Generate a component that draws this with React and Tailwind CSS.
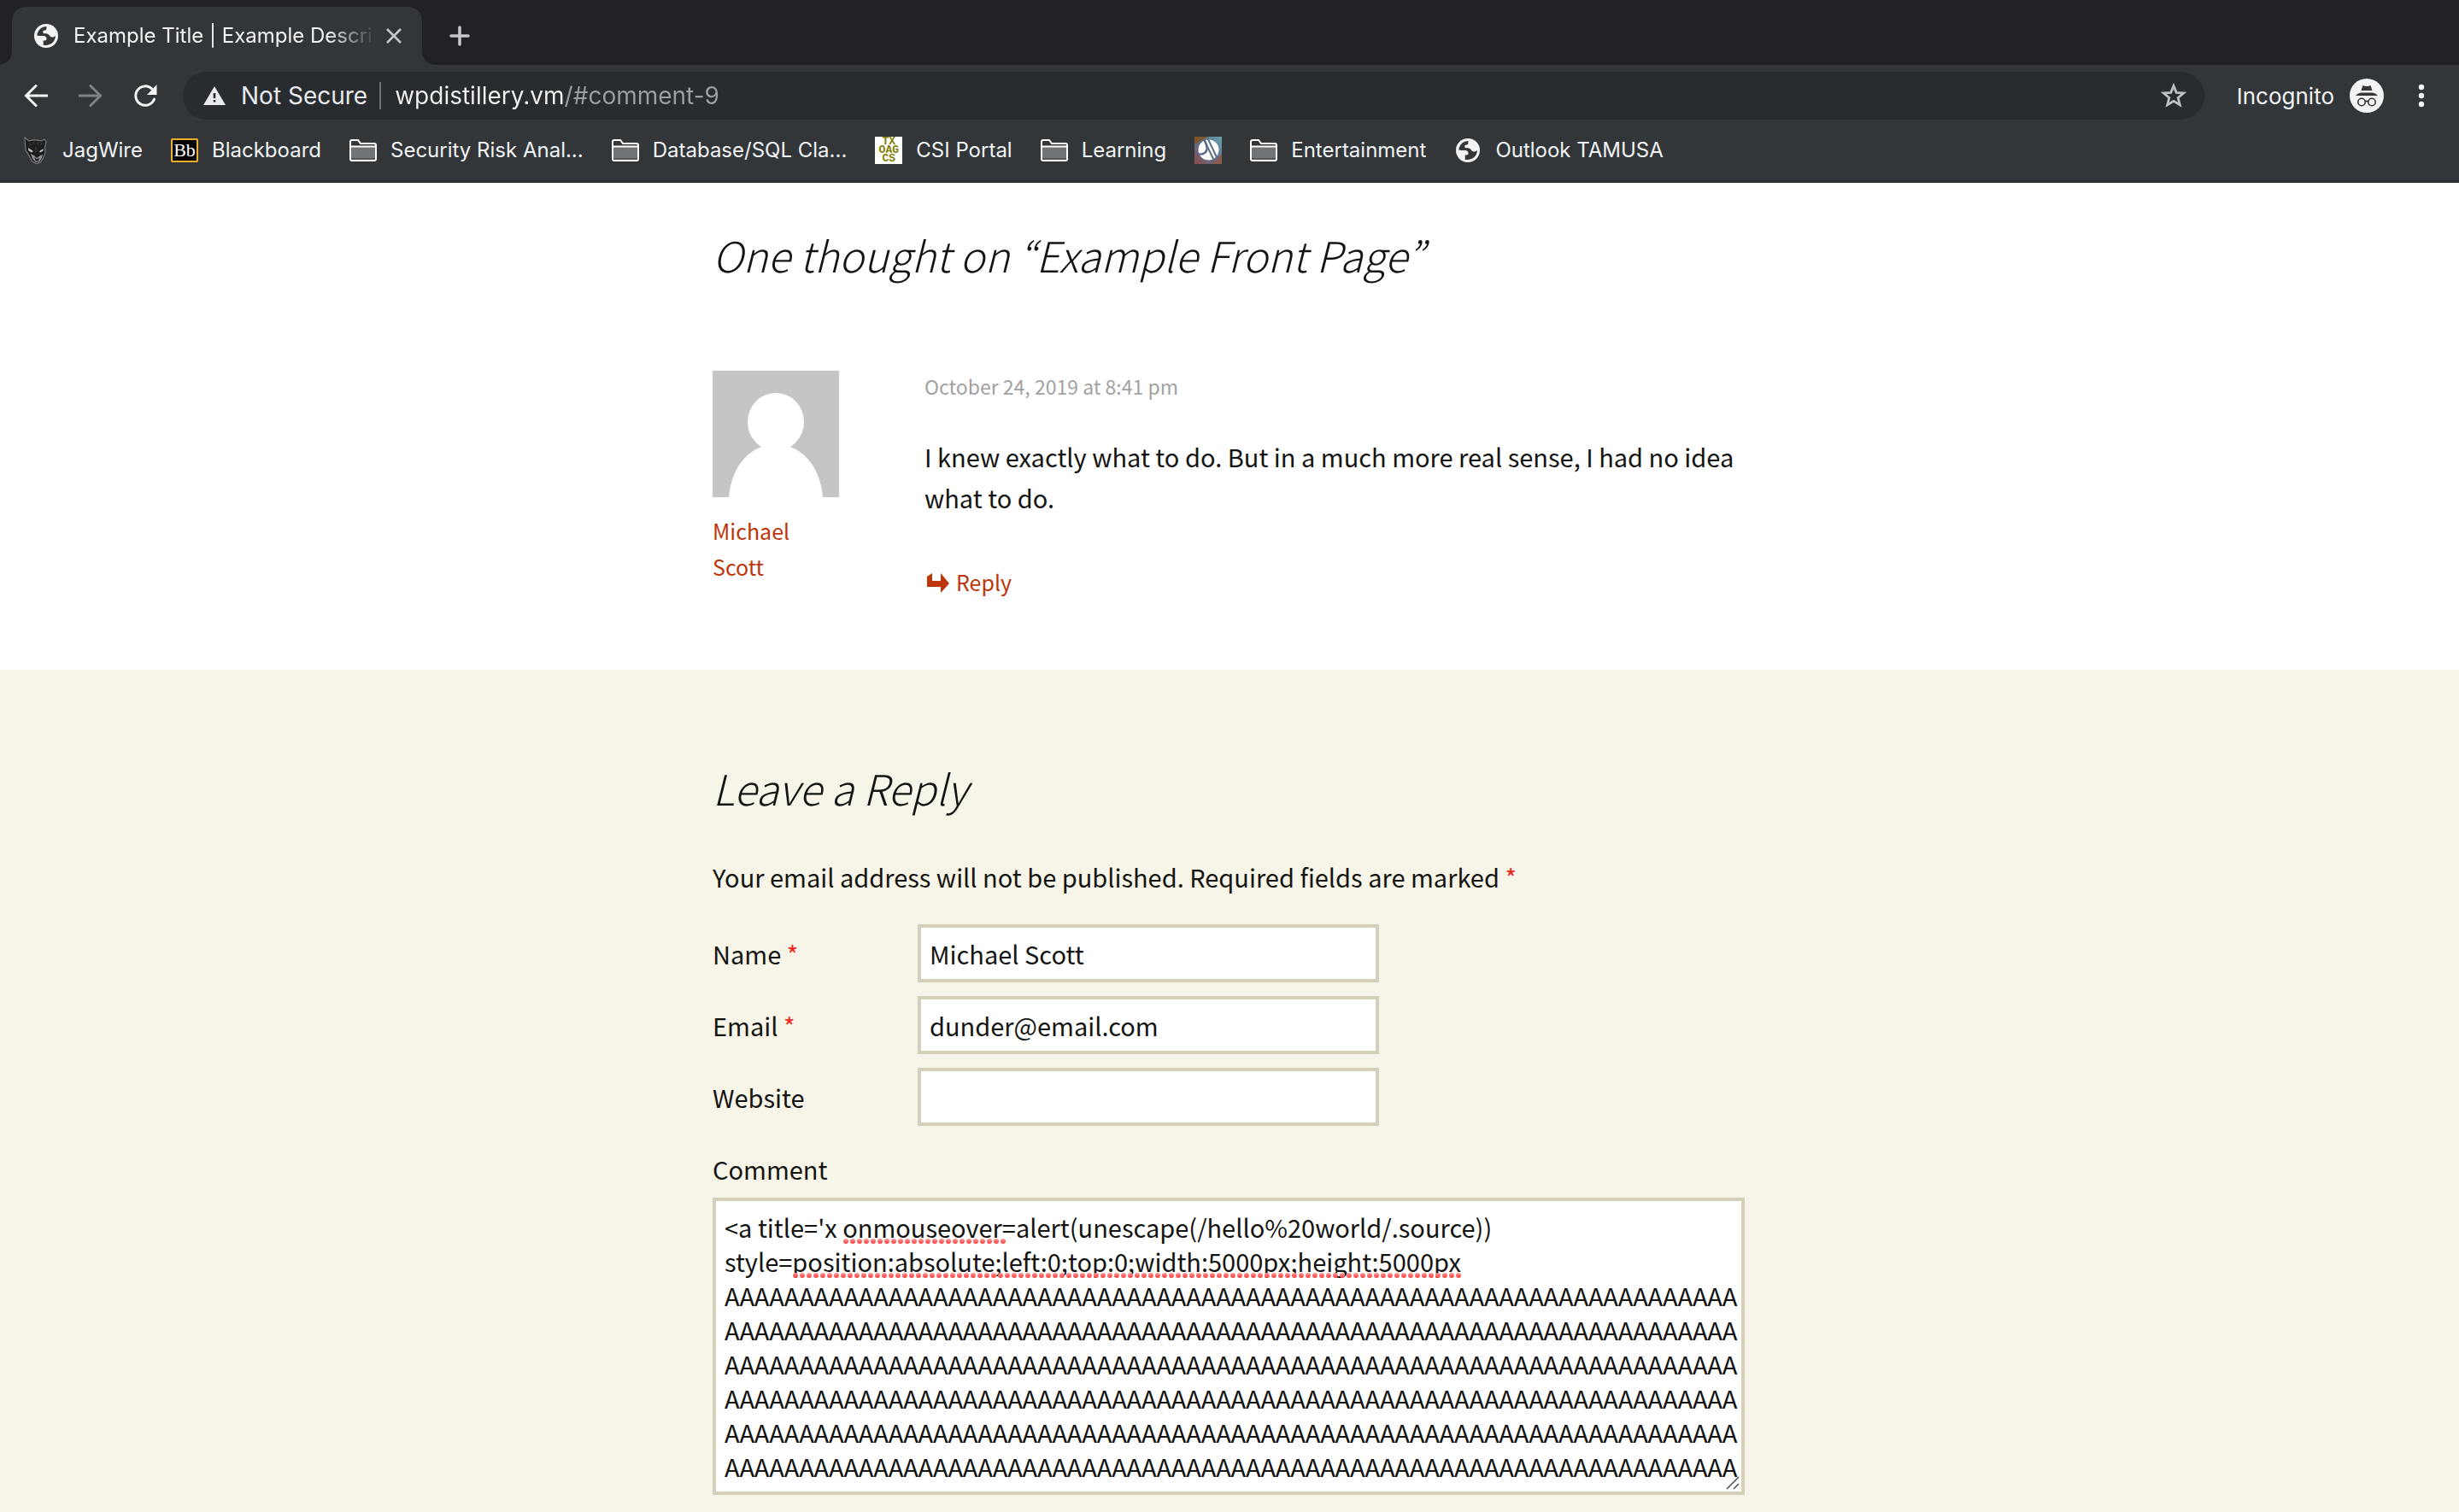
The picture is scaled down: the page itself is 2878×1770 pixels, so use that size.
import { useId } from "react";

const A_LINE = "A".repeat(68);
const COMMENT = [
  "<a title='x onmouseover=alert(unescape(/hello%20world/.source))",
  "style=position:absolute;left:0;top:0;width:5000px;height:5000px",
  A_LINE, A_LINE, A_LINE, A_LINE, A_LINE, A_LINE,
].join("\n");

function Globe() {
  return (
    <svg viewBox="0 0 28 28" className="size-7" aria-hidden="true">
      <circle cx="14" cy="14" r="14" fill="#f1f3f4" />
      <path
        d="M14.500 3C9 3 4 7 3.300 13.600L6 14h5.500c1.500.2 2.700 1.300 3 3 .2 1.600-.6 2.500-2 2.500h-1.800V24.700C18.500 26 25 21 24.900 13.700c-1 1.400-2.700 2-4.400 1.700-1.800-.4-2.300-1.700-3.500-2.900-1-1-2.500-1.300-4.500-1.300-1.400 0-2.300-.6-2.300-1.800 0-1.400 1.100-1.900 2.400-1.900 1.500 0 1.700-.7 1.700-1.900z"
        fill="#323639"
      />
    </svg>
  );
}

function Folder() {
  return (
    <svg viewBox="0 0 32 26" className="w-8 h-[26px]" aria-hidden="true">
      <path d="M1 3a2 2 0 0 1 2-2h7l3 4h16a2 2 0 0 1 2 2v16a2 2 0 0 1-2 2H3a2 2 0 0 1-2-2z" fill="#323639" stroke="#fff" strokeWidth="2" />
      <path d="M2 9h28v14.500H2z" fill="#707477" />
      <path d="M2 22h28v2H2z" fill="#54585b" />
      <path d="M1 8.500h30" stroke="#fff" strokeWidth="2" />
    </svg>
  );
}

function Jaguar() {
  return (
    <svg viewBox="0 0 32 32" className="size-8" aria-hidden="true">
      <path d="M4 1l5 4c4-1.500 9-1.500 14 0l4-2 2 3-1.500 6 .5 7-2.500 6-3 5-5 1.500-5-2.500-3.500-7-4-6-.5-7z" fill="#1c1d1f" stroke="#77797c" strokeWidth="1.200" />
      <path d="M8 13l6 4-2 1.500-3.500-2zM26 14l-5 3 .8 1.600L25 17z" fill="#c0c2c4" />
      <path d="M11 20l4 2 3 3 4-3 3-1-1 4-3 4.500-4 .5-4-4z" fill="#8b8d90" />
      <path d="M15 24l3 2.500 3-2-1 4h-3z" fill="#1b1c1e" />
      <path d="M9 8l3 2M14 6l1 3M20 6l-1 3M24 7l-2 3M17 12v6" stroke="#3c3e41" strokeWidth="1.200" />
    </svg>
  );
}

function BbIcon() {
  return (
    <span className="flex h-7 w-8 items-center justify-center rounded-xs border-2 border-[#eeb02c] bg-black font-['Liberation_Serif',serif] text-[22px] leading-none text-white">
      Bb
    </span>
  );
}

function TxIcon() {
  return (
    <span className="flex size-8 flex-col items-center justify-center bg-white font-['Liberation_Mono',monospace] text-[13px] leading-[10px] font-bold text-[#808000]">
      <span>TX</span>
      <span>OAG</span>
      <span>CS</span>
    </span>
  );
}

function SlashIcon() {
  const id = useId();
  return (
    <svg viewBox="0 0 32 32" className="size-8" aria-hidden="true">
      <defs>
        <linearGradient id={id} x1="0" y1="1" x2="1" y2="0">
          <stop offset="0" stopColor="#8a4d45" />
          <stop offset=".5" stopColor="#5a6f96" />
          <stop offset="1" stopColor="#6aa3a8" />
        </linearGradient>
      </defs>
      <rect width="32" height="32" fill={`url(#${id})`} />
      <path d="M0 0h16L0 9z" fill="#7d5528" />
      <path d="M20 32l12-12v12z" fill="#8a5a50" />
      <circle cx="16.500" cy="15.500" r="12" fill="#fff" />
      <path d="M11 3l12 25M15 1l12 25" stroke="#5a7186" strokeWidth="2" />
      <path d="M11 3c4 7 5 13 1 16-3 2-6 2-9 1" fill="none" stroke="#5a6a8c" strokeWidth="2.400" />
    </svg>
  );
}

const BOOKMARKS = [
  { icon: <Jaguar />, label: "JagWire" },
  { icon: <BbIcon />, label: "Blackboard" },
  { icon: <Folder />, label: "Security Risk Anal..." },
  { icon: <Folder />, label: "Database/SQL Cla..." },
  { icon: <TxIcon />, label: "CSI Portal" },
  { icon: <Folder />, label: "Learning" },
  { icon: <SlashIcon />, label: "" },
  { icon: <Folder />, label: "Entertainment" },
  { icon: <Globe />, label: "Outlook TAMUSA" },
];

function TabStrip() {
  return (
    <div className="flex h-[76px] items-end bg-[#202124]">
      <svg viewBox="0 0 16 16" className="-ml-0.5 size-4" aria-hidden="true">
        <path d="M16 0v16H0A16 16 0 0 0 16 0z" fill="#323639" />
      </svg>
      <div className="flex h-[68px] w-[480px] items-center rounded-t-2xl bg-[#323639] pr-[22px] pl-[26px]">
        <Globe />
        <span className="ml-[18px] flex-1 overflow-hidden text-[24px] whitespace-nowrap text-[#f1f3f4] [mask-image:linear-gradient(to_right,black_84%,transparent)]">
          Example Title | Example Descrip
        </span>
        <button aria-label="Close tab" className="ml-2.5 p-0.5">
          <svg viewBox="0 0 18 18" className="size-[18px]" fill="none" stroke="#c4c7ca" strokeWidth="2.600">
            <path d="M1 1l16 16M17 1L1 17" />
          </svg>
        </button>
      </div>
      <svg viewBox="0 0 16 16" className="size-4" aria-hidden="true">
        <path d="M0 0v16h16A16 16 0 0 1 0 0z" fill="#323639" />
      </svg>
      <button aria-label="New tab" className="mb-[22px] ml-4">
        <svg viewBox="0 0 24 24" className="size-6" stroke="#c4c7ca" strokeWidth="3.600" strokeLinecap="round">
          <path d="M12 2v20M2 12h20" />
        </svg>
      </button>
    </div>
  );
}

function Toolbar() {
  return (
    <div className="flex h-[72px] items-center pr-10 pl-7 text-[#f1f3f4]">
      <button aria-label="Back">
        <svg viewBox="0 0 28 28" className="size-7" fill="none" stroke="#f1f3f4" strokeWidth="3" strokeLinecap="round">
          <path d="M27 14H3M14 2.500L2.500 14 14 25.500" />
        </svg>
      </button>
      <button aria-label="Forward" className="ml-9">
        <svg viewBox="0 0 28 28" className="size-7" fill="none" stroke="#7f8284" strokeWidth="3" strokeLinecap="round">
          <path d="M1 14h24M14 2.500L25.500 14 14 25.500" />
        </svg>
      </button>
      <button aria-label="Reload" className="ml-9">
        <svg viewBox="0 0 28 28" className="size-7">
          <path d="M24.500 18A11.200 11.200 0 1 1 22 6.200" fill="none" stroke="#f1f3f4" strokeWidth="3" strokeLinecap="round" />
          <path d="M27.500 1v12H16z" fill="#f1f3f4" />
        </svg>
      </button>
      <div className="ml-[30px] flex h-14 flex-1 items-center rounded-full bg-[#282c2f] pr-[21px] pl-6 text-[28px]">
        <svg viewBox="0 0 26 22" className="h-[22px] w-[26px]" aria-hidden="true">
          <path d="M13 0l13 22H0z" fill="#e8eaed" />
          <path d="M11.700 8h2.600v6h-2.600zM11.700 16h2.600v2.600h-2.600z" fill="#282c2f" />
        </svg>
        <span className="ml-[18px] text-[#e8eaed]">Not Secure</span>
        <span className="mr-4 ml-3.5 h-8 w-0.5 bg-[#707477]" />
        <input
          type="text"
          aria-label="Address"
          defaultValue="wpdistillery.vm/#comment-9"
          className="flex-1 bg-[linear-gradient(to_right,#f1f3f4_198px,#9aa0a6_198px)] bg-clip-text text-transparent outline-none"
        />
        <button aria-label="Bookmark this page">
          <svg viewBox="0 0 30 30" className="size-[30px]" fill="none" stroke="#bdc1c6" strokeWidth="2.800">
            <path d="M15 3.500l3.200 7.900 8.500.6-6.500 5.500 2.100 8.300-7.300-4.500-7.300 4.500 2.100-8.300L3.300 12l8.500-.6z" />
          </svg>
        </button>
      </div>
      <span className="ml-[38px] text-[26px]">Incognito</span>
      <svg viewBox="0 0 40 40" className="ml-[18px] size-10" aria-hidden="true">
        <circle cx="20" cy="20" r="20" fill="#f1f3f4" />
        <path d="M15.500 8q4.500 2 9 0l2 6h-13zM7 20q3-3.500 7-3.500h12q4 0 7 3.500z" fill="#323639" />
        <g fill="none" stroke="#323639" strokeWidth="1.600">
          <circle cx="14" cy="27.500" r="4.200" />
          <circle cx="26" cy="27.500" r="4.200" />
          <path d="M18 27q2-1.200 4 0" />
        </g>
      </svg>
      <button aria-label="Menu" className="ml-10">
        <svg viewBox="0 0 8 28" className="h-7 w-2" fill="#f1f3f4">
          <circle cx="4" cy="4" r="3.200" />
          <circle cx="4" cy="14" r="3.200" />
          <circle cx="4" cy="24" r="3.200" />
        </svg>
      </button>
    </div>
  );
}

function Bookmarks() {
  return (
    <nav className="flex h-[66px] items-start gap-[33px] border-b-2 border-[#292c2e] px-[25px] pt-2 text-[24px] text-[#f1f3f4]">
      {BOOKMARKS.map((b, i) => (
        <a key={i} href="#bookmark" aria-label={b.label || "Bookmark"} className="flex h-10 items-center gap-4 whitespace-nowrap">
          <span className="flex w-8 justify-center">{b.icon}</span>
          {b.label && <span>{b.label}</span>}
        </a>
      ))}
    </nav>
  );
}

function Star() {
  return <span className="text-[#f0281c]">*</span>;
}

function Field({ label, required, value, type }) {
  const id = useId();
  return (
    <div className="flex items-center">
      <label htmlFor={id} className="w-60">
        {label} {required && <Star />}
      </label>
      <input
        id={id}
        type={type}
        defaultValue={value}
        className="h-[68px] w-[540px] border-4 border-[#d4d0ba] bg-white px-2.5 outline-none"
      />
    </div>
  );
}

function SpellDots({ className }) {
  const id = useId();
  return (
    <svg className={className} aria-hidden="true">
      <defs>
        <linearGradient id={`${id}g`} x1="0" y1="0" x2="0" y2="1">
          <stop offset="0" stopColor="#ff9d9d" />
          <stop offset="1" stopColor="#fb3b3b" />
        </linearGradient>
        <pattern id={`${id}p`} width="8" height="6" patternUnits="userSpaceOnUse">
          <circle cx="3" cy="3" r="3" fill={`url(#${id}g)`} />
        </pattern>
      </defs>
      <rect width="100%" height="100%" fill={`url(#${id}p)`} />
    </svg>
  );
}

export default function App() {
  return (
    <div className="min-h-screen bg-[#f7f5e7] font-['Noto_Sans_CJK_JP',sans-serif] text-[#141412]">
      <header className="bg-[#323639] font-[Inter,sans-serif]">
        <TabStrip />
        <Toolbar />
        <Bookmarks />
      </header>

      <section className="bg-white pt-12 pr-0.5 pb-[82px]">
        <div className="mx-auto max-w-[1208px]">
          <h2 className="text-[49px] leading-[72px] font-light italic">One thought on “Example Front Page”</h2>
          <article className="mt-[100px] flex">
            <div className="w-[248px] shrink-0">
              <svg viewBox="0 0 148 148" className="size-[148px]" role="img" aria-label="Avatar">
                <rect width="148" height="148" fill="#c5c5c5" />
                <ellipse cx="74" cy="60" rx="33" ry="34" fill="#fff" />
                <path d="M19 148C22 112 44 86 74 86s52 26 55 62z" fill="#fff" />
              </svg>
              <a href="#author" className="mt-[18px] block w-[148px] text-[25px] leading-[42px] text-[#bc360a]">
                Michael<br />Scott
              </a>
            </div>
            <div className="flex-1">
              <a href="#comment-9" className="block text-[23px] leading-9 text-[#a2a2a2]">October 24, 2019 at 8:41 pm</a>
              <p className="mt-10 text-[29px] leading-12">
                I knew exactly what to do. But in a much more real sense, I had no idea what to do.
              </p>
              <a href="#respond" className="mt-[54px] flex items-center text-[25px] leading-[42px] text-[#bc360a]">
                <svg viewBox="0 0 28 26" className="mr-[7px] ml-0.5 h-[26px] w-7" fill="currentColor" aria-hidden="true">
                  <path d="M1 7l6-4v9h10V3l10 12-10 11v-7H1z" />
                </svg>
                Reply
              </a>
            </div>
          </article>
        </div>
      </section>

      <section className="pt-[102px] pr-0.5 pb-5">
        <form className="mx-auto max-w-[1208px] text-[29px] leading-12">
          <h2 className="text-[49px] leading-[72px] font-light italic">Leave a Reply</h2>
          <p className="mt-11">
            Your email address will not be published. Required fields are marked <Star />
          </p>
          <div className="mt-8 flex flex-col gap-4">
            <Field label="Name" required type="text" value="Michael Scott" />
            <Field label="Email" required type="email" value="dunder@email.com" />
            <Field label="Website" type="url" value="" />
          </div>
          <label htmlFor="comment" className="mt-[26px] block">Comment</label>
          <div className="relative mt-2.5">
            <textarea
              id="comment"
              spellCheck={false}
              defaultValue={COMMENT}
              className="block h-[348px] w-full resize-none overflow-hidden border-4 border-[#d4d0ba] bg-white px-2.5 py-2.5 leading-10 whitespace-pre outline-none"
            />
            <SpellDots className="absolute top-12 left-[153px] h-1.5 w-[190px]" />
            <SpellDots className="absolute top-[88px] left-[94px] h-1.5 w-[782px]" />
            <svg viewBox="0 0 16 16" className="absolute right-1.5 bottom-1.5 size-4" stroke="#4a4a4a" strokeWidth="1.500" aria-hidden="true">
              <path d="M1 15L15 1M9 15l6-6" />
            </svg>
          </div>
        </form>
      </section>
    </div>
  );
}
